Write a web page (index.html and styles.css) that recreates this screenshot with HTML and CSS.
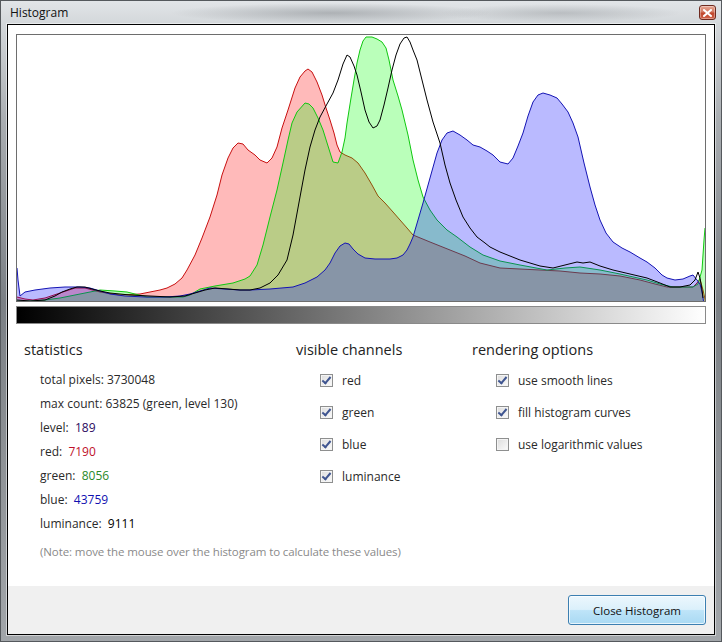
FILE: index.html
```html
<!DOCTYPE html>
<html>
<head>
<meta charset="utf-8">
<title>Histogram</title>
<link rel="stylesheet" href="styles.css">
</head>
<body>
<div class="window">
  <div class="titlebar">
    <span class="title">Histogram</span>
    <span class="close-btn">
      <svg width="9" height="8" viewBox="0 0 9 8"><path d="M1 1 L8 7 M8 1 L1 7" stroke="#fff" stroke-width="2" stroke-linecap="square"/></svg>
    </span>
  </div>
  <div class="client">
    <div class="main">
      <div class="plot">
        <svg class="plot-svg" width="688" height="266" viewBox="17 35 688 266">
          <path class="ch red" d="M14,304 L14,297 17,297 25,299 33,300 45,298 60,293 75,288 85,288 100,292 120,295 140,294 150,292 160,290 167,288 175,284 182,278 187,270 195,255 202,238 210,217 217,195 222,175 228,158 233,148 238,143 243,144 248,150 255,155 260,160 267,163 272,158 277,147 282,128 288,110 295,88 300,77 305,71 308,69 312,72 317,82 322,95 326,108 330,120 334,133 337,145 340,152 345,155 352,158 358,163 365,173 372,185 378,196 385,203 393,212 400,220 407,228 413,235 430,242 450,250 465,256 480,263 500,268 520,269 540,270 560,271 580,273 600,274 620,276 640,280 655,284 667,287 680,287 693,287 697,283 700,279 703,290 705,299 706,304 Z"/>
          <path class="ch green" d="M14,304 L17,301 30,301 45,300 60,298 75,295 90,292 100,290 115,291 127,292 147,297 165,297 183,297 190,295 200,289 215,286 233,283 245,279 250,276 257,265 263,245 270,217 277,190 283,163 288,140 292,123 297,112 305,103 309,104 313,108 318,118 323,130 328,146 333,162 338,163 342,152 345,138 347,123 351,98 354,80 357,63 360,50 363,41 366,37 372,37 377,39 382,42 386,48 389,60 393,80 398,96 402,110 408,135 413,160 418,180 423,197 430,210 437,220 447,230 457,237 470,247 483,255 500,261 520,265 547,270 565,268 580,267 600,270 620,274 647,280 660,284 673,287 685,287 693,287 698,284 702,270 704,240 705,228 708,228 708,304 Z"/>
          <path class="ch blue" d="M14,304 L14,268 17,268 18,280 20,296 25,292 35,290 50,288 65,287 80,287 90,288 100,291 110,294 125,296 145,297 165,297 180,296 190,294 200,291 210,288 225,289 240,290 250,290 270,289 293,287 305,283 317,277 325,270 330,263 335,253 340,246 345,243 349,244 353,249 358,254 365,258 375,259 383,259 390,259 397,258 403,255 407,250 410,244 413,237 418,220 423,203 430,178 437,153 442,140 447,133 453,131 460,135 467,140 473,145 480,147 487,151 493,155 500,162 508,164 513,158 518,146 523,133 528,116 533,102 538,95 543,93 550,95 557,98 562,104 568,112 573,123 578,137 584,163 590,187 595,205 600,220 606,233 613,242 622,248 630,252 640,258 647,262 655,268 662,275 667,278 675,280 683,279 690,276 693,275 697,280 700,284 702,292 703,298 704,304 Z"/>
          <path class="lum" d="M17,300 L30,301 45,300 55,296 62,292 70,289 77,287 85,287 92,289 100,291 110,293 130,295 150,296 170,297 185,296 195,293 205,290 215,288 228,289 240,290 250,290 260,288 270,283 278,275 287,260 293,235 300,197 305,170 310,147 315,130 320,117 327,104 333,93 338,80 343,64 347,55 350,57 354,66 357,75 361,92 365,110 369,122 373,128 377,126 380,120 384,105 388,88 392,70 396,55 400,44 404,38 407,37 410,42 413,50 417,60 422,80 427,100 433,122 440,143 445,165 450,183 456,200 463,217 470,228 477,237 485,243 490,247 500,252 510,256 520,260 530,263 540,266 553,268 565,265 577,262 583,263 590,262 600,266 613,270 630,274 647,278 660,283 670,287 680,287 690,285 695,280 698,272 700,278 702,290 703,298"/>
        </svg>
      </div>
      <div class="gradient-bar"></div>
      <div class="panels">
        <section class="panel stats">
          <h2 class="heading">statistics</h2>
          <ul class="stat-list">
            <li>total pixels: 3730048</li>
            <li>max count: 63825 (green, level 130)</li>
            <li>level:&nbsp; <span class="v-level">189</span></li>
            <li>red:&nbsp; <span class="v-red">7190</span></li>
            <li>green:&nbsp; <span class="v-green">8056</span></li>
            <li>blue:&nbsp; <span class="v-blue">43759</span></li>
            <li>luminance:&nbsp; <span class="v-lum">9111</span></li>
          </ul>
          <p class="note">(Note: move the mouse over the histogram to calculate these values)</p>
        </section>
        <section class="panel channels">
          <h2 class="heading">visible channels</h2>
          <ul class="check-list">
            <li><span class="cb checked"></span>red</li>
            <li><span class="cb checked"></span>green</li>
            <li><span class="cb checked"></span>blue</li>
            <li><span class="cb checked"></span>luminance</li>
          </ul>
        </section>
        <section class="panel options">
          <h2 class="heading">rendering options</h2>
          <ul class="check-list">
            <li><span class="cb checked"></span>use smooth lines</li>
            <li><span class="cb checked"></span>fill histogram curves</li>
            <li><span class="cb"></span>use logarithmic values</li>
          </ul>
        </section>
      </div>
    </div>
    <div class="footer">
      <button class="btn">Close Histogram</button>
    </div>
  </div>
</div>
</body>
</html>
```
FILE: styles.css
```css
* { box-sizing: border-box; }
html, body { margin: 0; padding: 0; }
body {
  width: 722px;
  height: 642px;
  overflow: hidden;
  font-family: "Open Sans", "Noto Sans", sans-serif;
  color: #1e1e1e;
}
.window {
  width: 722px;
  height: 642px;
  border: 1px solid #55595d;
  padding: 0 6px 6px 6px;
  display: flex;
  flex-direction: column;
  background:
    radial-gradient(ellipse 160px 10px at 330px 12px, rgba(90,95,100,0.35), rgba(90,95,100,0)),
    radial-gradient(ellipse 120px 9px at 560px 12px, rgba(90,95,100,0.25), rgba(90,95,100,0)),
    linear-gradient(to bottom, #e2e5e8 0, #d3d7da 23px, #a9adb1 120px, #7b8085 300px, #8d9195 450px, #a2a6aa 100%);
}
.titlebar {
  height: 23px;
  flex: none;
  display: flex;
  align-items: center;
  justify-content: space-between;
  padding: 0 0 0 3px;
}
.title {
  font-size: 12px;
  color: #111;
  margin-top: -1px;
}
.close-btn {
  width: 17px;
  height: 15px;
  margin-right: -1px;
  border: 1px solid #6e2a1f;
  border-radius: 3px;
  background: linear-gradient(to bottom, #e8a693 0, #d37a63 45%, #c0462c 55%, #d0634a 100%);
  display: flex;
  align-items: center;
  justify-content: center;
  box-shadow: inset 0 0 0 1px rgba(255,255,255,0.35);
}
.close-btn svg { display: block; }
.client {
  flex: 1;
  display: flex;
  flex-direction: column;
  border: 1px solid #000;
  background: #fff;
  box-shadow: 0 0 0 1px rgba(255,255,255,0.5);
}
.main {
  flex: 1;
  padding: 9px 8px 0 8px;
}
.plot {
  width: 690px;
  height: 268px;
  border: 1px solid #6e6e6e;
  background: #fff;
}
.plot-svg { display: block; overflow: hidden; }
.ch { stroke-width: 1; stroke-linejoin: round; }
.red { fill: rgba(255, 0, 0, 0.27); stroke: #c81010; }
.green { fill: rgba(0, 255, 0, 0.27); stroke: #10c810; }
.blue { fill: rgba(0, 0, 255, 0.27); stroke: #1414b4; }
.lum { fill: none; stroke: #000; stroke-width: 1; stroke-linejoin: round; }
.gradient-bar {
  width: 690px;
  height: 18px;
  margin-top: 4px;
  border: 1px solid #8a8a8a;
  background: linear-gradient(to right, #000 0%, #fff 100%);
}
.panels {
  display: grid;
  grid-template-columns: 272px 176px 1fr;
  padding: 16px 0 0 8px;
}
.heading {
  margin: 0;
  font-weight: normal;
  font-size: 14.5px;
  line-height: 20px;
  color: #222;
}
.stat-list, .check-list {
  list-style: none;
  margin: 0;
  padding: 0;
}
.stat-list {
  margin-top: 8px;
  padding-left: 16px;
}
.stat-list li {
  font-size: 12px;
  line-height: 24px;
  height: 24px;
  white-space: nowrap;
  color: #2a2a2a;
}
.v-level { color: #2c0a60; }
.v-red { color: #c0102a; }
.v-green { color: #2a8a2a; }
.v-blue { color: #1010b0; }
.v-lum { color: #000; }
.note {
  margin: 8px 0 0 16px;
  font-size: 11.5px;
  line-height: 16px;
  color: #8a8a8a;
  white-space: nowrap;
  letter-spacing: -0.1px;
}
.check-list {
  margin-top: 4px;
  padding-left: 24px;
}
.check-list li {
  display: flex;
  align-items: center;
  height: 32px;
  font-size: 12px;
  color: #2a2a2a;
  white-space: nowrap;
}
.cb {
  width: 13px;
  height: 13px;
  flex: none;
  margin-right: 9px;
  border: 1px solid #8e8f8f;
  background: linear-gradient(to bottom right, #dcdcdc 0, #f2f2f2 70%, #fbfbfb 100%);
  box-shadow: inset 0 0 0 1px #f4f4f4;
  position: relative;
}
.cb.checked::after {
  content: "";
  position: absolute;
  left: 3px;
  top: 0px;
  width: 3px;
  height: 7px;
  border: solid #3f5590;
  border-width: 0 2px 2px 0;
  transform: rotate(40deg);
}
.footer {
  height: 48px;
  flex: none;
  background: #f0f0f0;
  display: flex;
  justify-content: flex-end;
  align-items: flex-start;
  padding: 9px 8px 0 0;
}
.btn {
  width: 138px;
  height: 30px;
  border: 1px solid #3c7fb1;
  border-radius: 3px;
  background: linear-gradient(to bottom, #ecf7fd 0, #dbf0fb 48%, #bee4f8 52%, #a9d9f3 100%);
  box-shadow: inset 0 0 0 1px rgba(255,255,255,0.7);
  font-family: "Open Sans", "Noto Sans", sans-serif;
  font-size: 11.5px;
  color: #111;
  padding: 0;
}
```
